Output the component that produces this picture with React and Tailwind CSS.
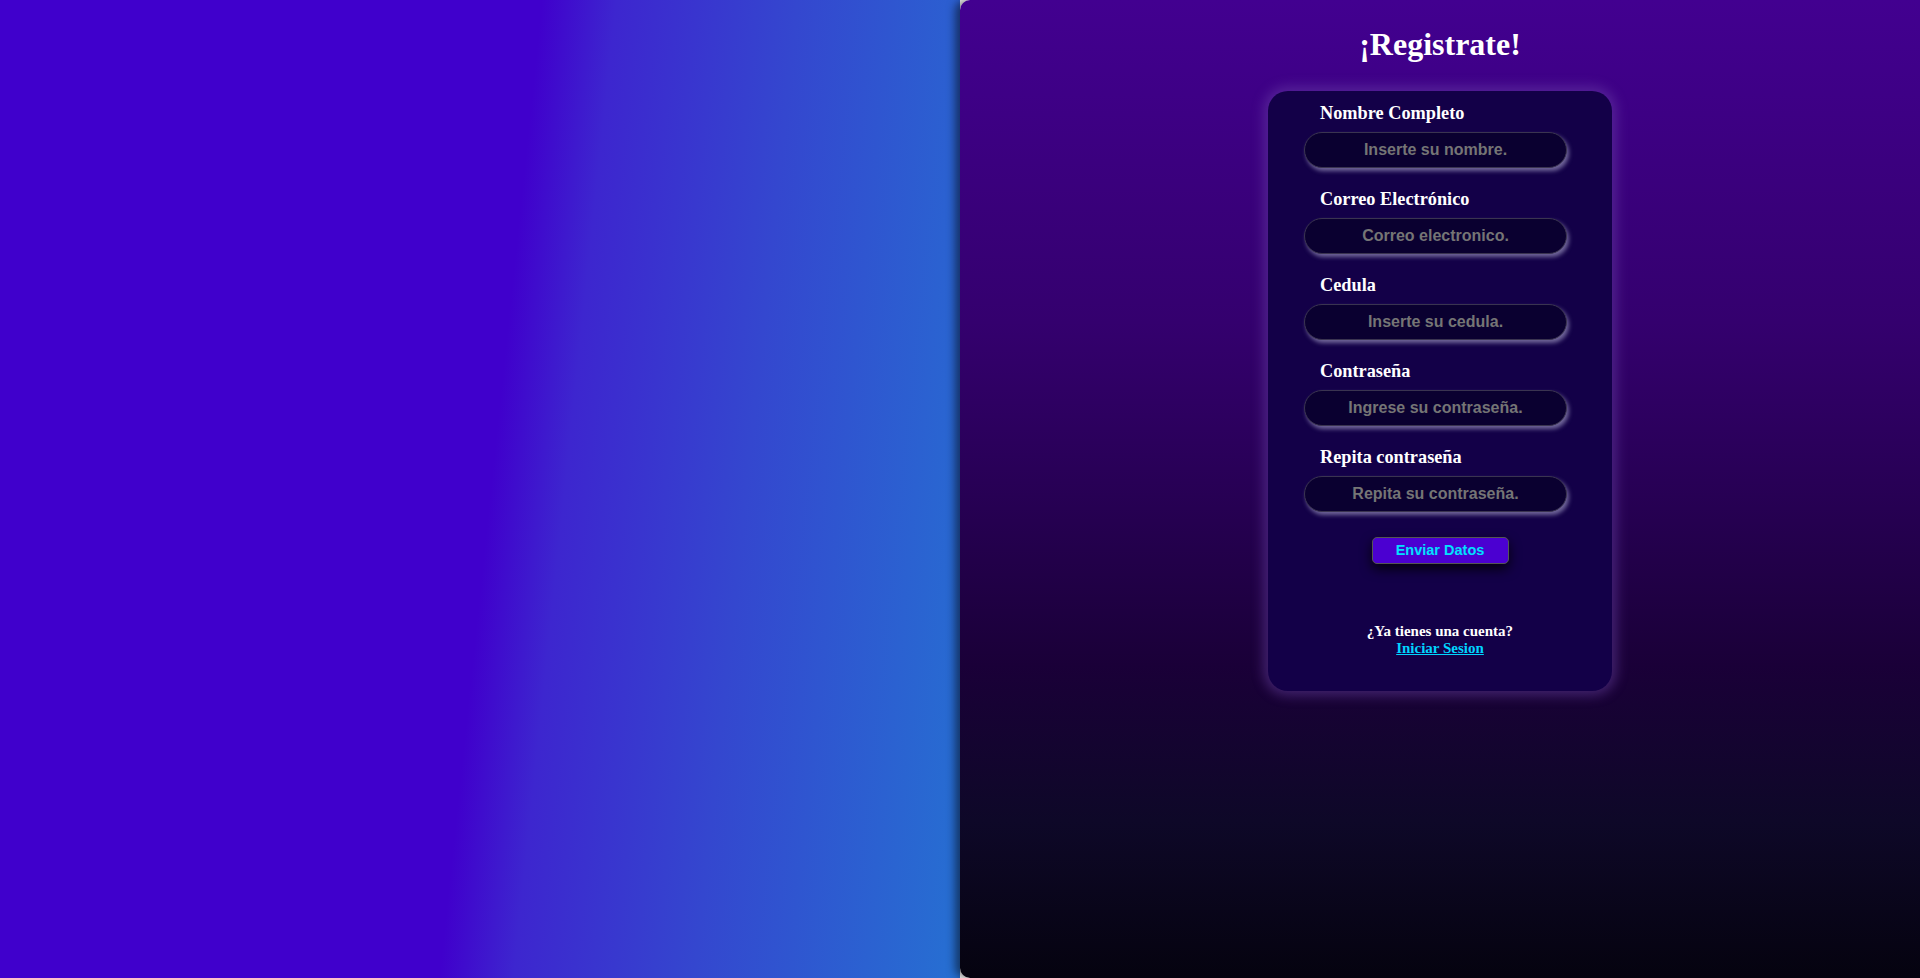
import React from "react";

const fields = [
  { label: "Nombre Completo", ph: "Inserte su nombre.", type: "text" },
  { label: "Correo Electrónico", ph: "Correo electronico.", type: "email" },
  { label: "Cedula", ph: "Inserte su cedula.", type: "text" },
  { label: "Contraseña", ph: "Ingrese su contraseña.", type: "password" },
  { label: "Repita contraseña", ph: "Repita su contraseña.", type: "password" },
];

export default function App() {
  return (
    <div className="flex h-[978px] w-full overflow-hidden">
      <div className="w-1/2 h-full bg-[linear-gradient(96deg,#4000cc_0%,#4000cc_51%,#3d26cf_58%,#3447cf_75%,#2670d2_100%)]" />
      <div className="relative w-1/2 h-full rounded-l-[10px] shadow-[-5px_0_9px_rgba(0,0,0,0.5)] bg-[linear-gradient(to_bottom,#420090_0%,#34006e_33%,#260052_52%,#1a0038_68%,#0e0828_84%,#05030f_100%)] flex flex-col items-center font-['Liberation_Serif',serif]">
        <h1 className="mt-[26px] text-[32px] leading-[37px] font-bold text-white">¡Registrate!</h1>
        <div className="mt-[28px] w-[344px] h-[600px] rounded-[20px] bg-[#130048] shadow-[0_0_12px_5px_rgba(110,70,170,0.45)] flex flex-col pt-[11px]">
          {fields.map((f, i) => (
            <div key={i} className="flex flex-col mb-[20px]">
              <label className="ml-[52px] text-[18.3px] leading-[22px] font-bold text-white">{f.label}</label>
              <input
                type={f.type}
                placeholder={f.ph}
                className="mt-[8px] ml-[36px] w-[263px] h-[36px] rounded-full border border-[#3a3450] bg-[#0a0030] shadow-[2px_3px_4px_rgba(190,185,220,0.55)] text-center text-[16px] font-bold text-white placeholder:text-[#757575] outline-none font-['Liberation_Sans',sans-serif]"
              />
            </div>
          ))}
          <div className="flex justify-center mt-[5px]">
            <button className="w-[137px] h-[27px] rounded-[5px] border border-[#555] bg-[#4b00d1] text-[#00e1ff] text-[14.5px] font-bold font-['Liberation_Sans',sans-serif] shadow-[0_5px_12px_rgba(0,0,0,0.8)]">
              Enviar Datos
            </button>
          </div>
          <div className="mt-[59px] flex flex-col items-center text-[15px] leading-[17px] font-bold">
            <span className="text-white">¿Ya tienes una cuenta?</span>
            <a href="#" className="text-[#00d4ff] underline">Iniciar Sesion</a>
          </div>
        </div>
      </div>
    </div>
  );
}
